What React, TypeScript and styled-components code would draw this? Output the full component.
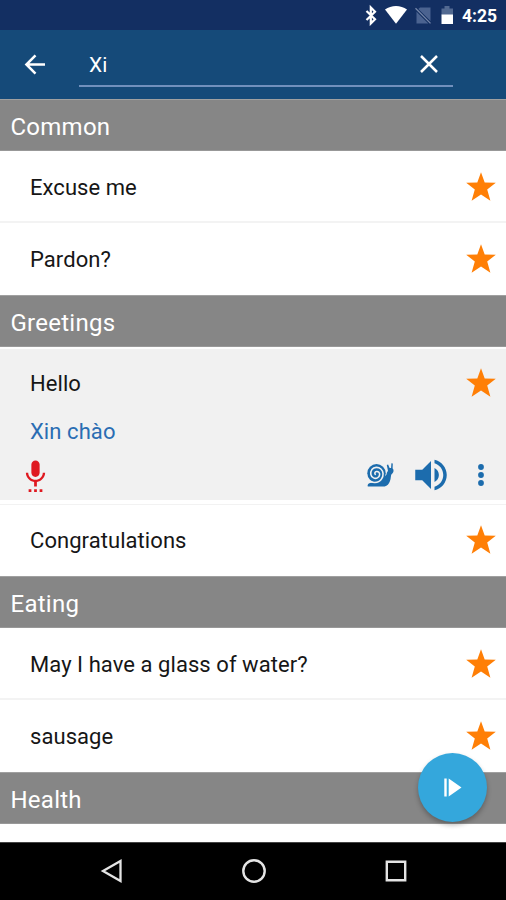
import React from 'react';
import styled, { createGlobalStyle } from 'styled-components';

const GlobalStyle = createGlobalStyle`
  * { box-sizing: border-box; }
  body { margin: 0; background: #fff; }
`;

const Screen = styled.div`
  position: relative;
  display: flex;
  flex-direction: column;
  width: 506px;
  height: 900px;
  overflow: hidden;
  background: #fff;
  font-family: Roboto, 'Noto Sans', sans-serif;
`;

const StatusBar = styled.div`
  display: flex;
  flex: none;
  align-items: center;
  justify-content: flex-end;
  height: 30px;
  padding-right: 9px;
  background: #132f62;
  color: #fff;
`;

const StatusIcons = styled.svg`
  display: block;
  margin-right: 7px;
`;

const Clock = styled.span`
  width: 35px;
  margin-top: 2px;
  font-size: 17.5px;
  font-weight: 700;
  line-height: 30px;
  white-space: nowrap;
`;

const AppBar = styled.header`
  display: flex;
  flex: none;
  height: 69px;
  padding: 0 53px 0 23px;
  background: #154a79;
`;

const BackButton = styled.div`
  width: 56px;
  padding-top: 23px;
`;

const SearchField = styled.div`
  display: flex;
  flex: 1;
  justify-content: space-between;
  height: 57px;
  padding: 12px 13px 0 10px;
  border-bottom: 2px solid #7190bd;
  color: #fff;
  font-size: 21px;
  line-height: 46px;

  svg { margin-top: 12px; }
`;

const List = styled.main`
  flex: 1;
  min-height: 0;
  overflow: hidden;
`;

const SectionHeader = styled.h2`
  height: 52px;
  margin: 0;
  padding-left: 10.5px;
  border-top: 1px solid #a0a0a0;
  border-bottom: 1px solid #989898;
  background: #868686;
  color: #fff;
  font-size: 24px;
  font-weight: 400;
  line-height: 54px;
  letter-spacing: 0.25px;
`;

const Row = styled.div<{ $divided?: boolean }>`
  display: flex;
  align-items: center;
  justify-content: space-between;
  height: 72px;
  padding: 2px 10px 0 30px;
  border-bottom: 2px solid ${(p) => (p.$divided ? '#f3f3f3' : 'transparent')};
`;

const Phrase = styled.span`
  margin-top: 2px;
  color: #161616;
  font-size: 22px;
  line-height: 30px;
  letter-spacing: 0.06px;
`;

const Expanded = styled.section`
  height: 157px;
  border-top: 2px solid #fdfdfd;
  border-bottom: 4px solid #fff;
  background: #f1f1f1;

  ${Row} {
    height: 70px;
    padding-top: 0;
  }

  ${Phrase} {
    margin-top: 1px;
  }
`;

const CollapsedAfter = styled.div`
  height: 72px;
  box-shadow: inset 0 1px #f2f2f2;
`;

const Translation = styled.div`
  height: 30px;
  margin-top: -3px;
  padding-left: 30px;
  color: #2a6db3;
  font-size: 22px;
  line-height: 31px;
  letter-spacing: 0.08px;
`;

const Actions = styled.div`
  display: flex;
  align-items: center;
  height: 42px;
  margin-top: 8px;
  padding: 0 9px 0 19px;
`;

const Spacer = styled.div`
  flex: 1;
`;

const IconSlot = styled.div<{ $gap?: number }>`
  display: flex;
  margin-right: ${(p) => p.$gap ?? 0}px;
`;

const PlayButton = styled.button`
  position: absolute;
  right: 19px;
  bottom: 78px;
  width: 69px;
  height: 69px;
  padding: 0;
  border: 0;
  border-radius: 50%;
  background: #34a7dc;
  box-shadow: 0 3px 5px rgba(0, 0, 0, 0.28);

  svg { display: block; }
`;

const NavBar = styled.nav`
  display: flex;
  flex: none;
  align-items: center;
  justify-content: space-between;
  height: 58px;
  padding: 0 98px 2px 100px;
  border-top: 1px solid #444;
  background: #000;
`;

const Star = () => (
  <svg width="30" height="30" viewBox="0 0 30 30">
    <path
      fill="#ff7f06"
      d="M15 .3l3.700 10.200 11.100.3-8.600 6.800 3.200 11.200L15 22.500l-9.400 6.300 3.200-11.200L.2 10.800l11.100-.3z"
    />
  </svg>
);

const PhraseRow = ({ text, divided }: { text: string; divided?: boolean }) => (
  <Row $divided={divided}>
    <Phrase>{text}</Phrase>
    <Star />
  </Row>
);

const Snail = () => (
  <svg width="28" height="26" viewBox="0 0 28 26">
    <path
      fill="#1c6cad"
      d="M.8 24.600C0 22.500 1.500 21.300 4 20.800L14 19l5.500-6.500c.3-2 .8-3 1.500-3.600L19.800 3l1.300-.4L22.600 6h1.500L24.400 1.300l1.400.1-.2 5c1.200.8 1.200 3.200.3 4.300-.8 1-1.500 1.300-1.800 2.500-.5 2.500-.4 5.300-2 7.700-1.500 2.600-3.600 3.700-6.300 3.700z"
    />
    <circle cx="9.500" cy="11.300" r="9.200" fill="#1c6cad" />
    <path
      fill="none"
      stroke="#f1f1f1"
      strokeWidth="1.600"
      strokeLinecap="round"
      d="M3.500 19.800c4.200 1.300 8.700.6 11.100-2.900 2.200-3.200 1.900-7.500-.7-9.900-2.700-2.400-6.900-2.100-9 .6-2 2.800-1.400 6.900 1.600 8.300 2.700 1.200 5.700-.3 6.100-3 .3-2.200-1.300-3.700-3.100-3.400-1.500.3-2.200 1.900-1.200 2.800"
    />
  </svg>
);

export default function App() {
  return (
    <>
      <GlobalStyle />
      <Screen>
        <StatusBar>
          <StatusIcons width="92" height="22" viewBox="0 0 92 22">
            <path
              d="M3.500 7l8.500 8.300-4.200 4.200V3.500L12 7.700 3.500 16"
              fill="none"
              stroke="#fff"
              strokeWidth="2.200"
            />
            <path d="M22 5.600c6.300-4.900 15.700-4.900 22 0L33 19.800z" fill="#fff" />
            <path
              d="M57 3.600h10.500v13.500L55.300 4.900zM53.500 7.800l11.800 11.700H53.500z"
              fill="#4b6390"
            />
            <path d="M52.500 4.200l15 15.200" stroke="#7788aa" strokeWidth="1.300" />
            <path d="M78.500 4.500h3V2h5v2.500h3.500v6.700H78.500z" fill="#526991" />
            <path d="M78.500 10.500H90v9.500H78.500z" fill="#fff" />
          </StatusIcons>
          <Clock>4:25</Clock>
        </StatusBar>

        <AppBar>
          <BackButton>
            <svg width="24" height="24" viewBox="0 0 24 24" fill="none" stroke="#fff" strokeWidth="2.500">
              <path d="M22 11.500H4M12.500 2.400L3.400 11.500l9.100 9.100" />
            </svg>
          </BackButton>
          <SearchField>
            <span>Xi</span>
            <svg width="22" height="22" viewBox="0 0 22 22" stroke="#fff" strokeWidth="2.500">
              <path d="M3 2l16 16M19 2L3 18" />
            </svg>
          </SearchField>
        </AppBar>

        <List>
          <SectionHeader>Common</SectionHeader>
          <PhraseRow text="Excuse me" divided />
          <PhraseRow text="Pardon?" />
          <SectionHeader>Greetings</SectionHeader>
          <Expanded>
            <PhraseRow text="Hello" />
            <Translation>Xin chào</Translation>
            <Actions>
              <IconSlot>
                <svg width="33" height="33" viewBox="0 0 24 24" fill="#df1920">
                  <path d="M7 24h2v-2H7zm5-11c1.660 0 3-1.340 3-3V4c0-1.660-1.340-3-3-3S9 2.340 9 4v6c0 1.660 1.340 3 3 3zm-1 11h2v-2h-2zm4 0h2v-2h-2zm4-14h-1.700c0 3-2.540 5.100-5.300 5.100S6.700 13 6.700 10H5c0 3.410 2.720 6.230 6 6.720V20h2v-3.280c3.280-.49 6-3.310 6-6.720z" />
                </svg>
              </IconSlot>
              <Spacer />
              <IconSlot $gap={15}>
                <Snail />
              </IconSlot>
              <IconSlot $gap={13}>
                <svg width="42" height="42" viewBox="0 0 24 24" fill="#1c6cad">
                  <path d="M3 9v6h4l5 5V4L7 9zm13.500 3c0-1.770-1.020-3.290-2.500-4.030v8.050c1.480-.73 2.500-2.250 2.500-4.020zM14 3.230v2.060c2.890.86 5 3.540 5 6.710s-2.110 5.850-5 6.710v2.060c4.010-.91 7-4.490 7-8.770s-2.990-7.860-7-8.770z" />
                </svg>
              </IconSlot>
              <IconSlot>
                <svg width="32" height="32" viewBox="0 0 32 32" fill="#1c6cad">
                  <circle cx="16" cy="8" r="2.900" />
                  <circle cx="16" cy="16" r="2.900" />
                  <circle cx="16" cy="24" r="2.900" />
                </svg>
              </IconSlot>
            </Actions>
          </Expanded>
          <CollapsedAfter>
            <PhraseRow text="Congratulations" />
          </CollapsedAfter>
          <SectionHeader>Eating</SectionHeader>
          <PhraseRow text="May I have a glass of water?" divided />
          <PhraseRow text="sausage" />
          <SectionHeader>Health</SectionHeader>
        </List>

        <PlayButton aria-label="Play">
          <svg width="69" height="69" viewBox="0 0 69 69" fill="#fff">
            <path d="M26.300 25.500h2.400v18h-2.400zM30.700 25.500L43.500 34.500l-12.800 9z" />
          </svg>
        </PlayButton>

        <NavBar>
          <svg width="24" height="26" viewBox="0 0 24 26" fill="none" stroke="#e4e4e4" strokeWidth="2.300">
            <path d="M20.500 3v20L3 13z" />
          </svg>
          <svg width="26" height="26" viewBox="0 0 26 26" fill="none" stroke="#e4e4e4" strokeWidth="2.400">
            <circle cx="13" cy="13" r="10.700" />
          </svg>
          <svg width="24" height="24" viewBox="0 0 24 24" fill="none" stroke="#e4e4e4" strokeWidth="2.400">
            <path d="M2.800 2.800h18.400v18.400H2.800z" />
          </svg>
        </NavBar>
      </Screen>
    </>
  );
}
